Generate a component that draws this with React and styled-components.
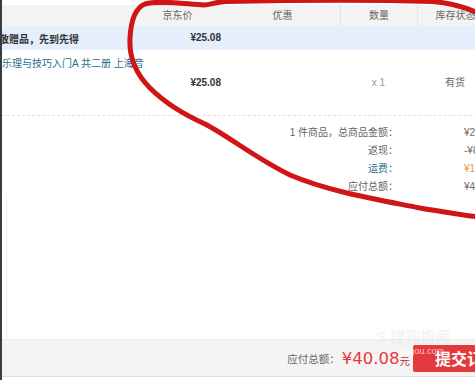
import React from 'react';
import styled, { createGlobalStyle } from 'styled-components';

const GlobalStyle = createGlobalStyle`
	html, body {
		margin: 0;
		padding: 0;
		background: #fff;
	}
	body {
		font-family: 'Liberation Sans', 'Noto Sans CJK SC', sans-serif;
		font-size: 10px;
		color: #666;
		overflow: hidden;
	}
`;

const LINK = '#1f6e8c';
const RED = '#e4393c';
const COLS = '128px 95px 115px 77px 76px 1fr';

const Page = styled.div`
	position: relative;
	display: flex;
	width: 475px;
	height: 380px;
	overflow: hidden;
`;

const LeftEdge = styled.div`
	width: 2px;
	flex-shrink: 0;
	background: #3b3b3b;
`;

const Main = styled.div`
	flex: 1;
	min-width: 0;
	display: flex;
	flex-direction: column;
	padding-top: 5px;
	overflow: hidden;
`;

const TableRow = styled.div`
	display: grid;
	grid-template-columns: ${COLS};
	width: 560px;
	flex-shrink: 0;
`;

const HeadRow = styled(TableRow)`
	height: 21px;
	background: #f3f3f3;
	align-items: stretch;
`;

const HeadCell = styled.div`
	text-align: center;
	line-height: 21px;
	color: #666;
	border-left: ${(p) => (p.$divider ? '1px solid #e4e4e4' : 'none')};
`;

const GiftRow = styled(TableRow)`
	height: 24px;
	background: #e4effb;
	align-items: center;
	font-weight: 700;
	color: #333;
`;

const GiftText = styled.div`
	margin-left: -3px;
	white-space: nowrap;
`;

const ItemRow = styled(TableRow)`
	height: 65px;
	border-bottom: 1px dashed #e2e2e2;
`;

const Cell = styled.div`
	text-align: ${(p) => p.$align || 'center'};
	padding-top: ${(p) => p.$top || 0}px;
	padding-right: ${(p) => p.$right || 0}px;
	line-height: 12px;
	font-weight: ${(p) => (p.$bold ? 700 : 400)};
	color: ${(p) => p.$color || '#666'};
	white-space: nowrap;
`;

const ProductName = styled.a`
	display: block;
	padding-top: 8px;
	line-height: 12px;
	color: ${LINK};
	text-decoration: none;
	white-space: nowrap;
`;

const Summary = styled.div`
	display: grid;
	grid-template-columns: 396px auto;
	column-gap: 66px;
	padding-top: 8px;
	line-height: 18px;
	flex-shrink: 0;
`;

const SumLabel = styled.div`
	text-align: right;
	color: ${(p) => (p.$link ? LINK : '#666')};
`;

const SumValue = styled.div`
	color: ${(p) => p.$color || '#666'};
	white-space: nowrap;
`;

const Filler = styled.div`
	flex: 1;
	margin-left: 4px;
	border-left: 1px solid #f2f2f2;
`;

const BottomBar = styled.div`
	box-sizing: border-box;
	display: flex;
	align-items: center;
	justify-content: flex-end;
	width: 560px;
	height: 38px;
	flex-shrink: 0;
	margin-bottom: 3px;
	padding-right: 41px;
	background: #f4f4f4;
	border-top: 1px solid #ececec;
	border-bottom: 1px solid #dcdcdc;
`;

const TotalLabel = styled.span`
	font-size: 10.5px;
	color: #666;
`;

const TotalPrice = styled.span`
	font-family: 'DejaVu Sans', 'Liberation Sans', sans-serif;
	font-size: 16.5px;
	color: ${RED};
	margin-left: 2px;
`;

const Yuan = styled.span`
	font-size: 10.5px;
	color: #b33;
	margin-top: 4px;
`;

const SubmitButton = styled.button`
	box-sizing: border-box;
	width: 108px;
	height: 27px;
	margin-left: 3px;
	padding: 0 0 0 22px;
	border: none;
	border-radius: 2px;
	background: ${RED};
	color: #fff;
	font-family: 'Noto Sans CJK SC', sans-serif;
	font-size: 16px;
	font-weight: 700;
	line-height: 27px;
	text-align: left;
	white-space: nowrap;
`;

const Watermark = styled.div`
	position: absolute;
	left: 376px;
	top: 325px;
	font-family: 'Liberation Sans', 'Noto Sans CJK SC', sans-serif;
	font-size: 15px;
	font-weight: 700;
	color: rgba(225, 225, 225, 0.35);
	pointer-events: none;
	white-space: nowrap;
`;

const WatermarkUrl = styled.div`
	position: absolute;
	left: 400px;
	top: 346px;
	font-size: 9px;
	color: rgba(255, 255, 255, 0.7);
	pointer-events: none;
`;

const Scribble = styled.svg`
	position: absolute;
	left: 0;
	top: 0;
	width: 475px;
	height: 380px;
	pointer-events: none;
`;

const App = () => {
	return (
		<>
			<GlobalStyle />
			<Page>
				<LeftEdge />
				<Main>
					<HeadRow>
						<HeadCell />
						<HeadCell>京东价</HeadCell>
						<HeadCell>优惠</HeadCell>
						<HeadCell $divider>数量</HeadCell>
						<HeadCell $divider>库存状态</HeadCell>
						<HeadCell />
					</HeadRow>
					<GiftRow>
						<GiftText>敬赠品，先到先得</GiftText>
						<Cell $align='right' $right={4} $bold $color='#333'>
							¥25.08
						</Cell>
					</GiftRow>
					<ItemRow>
						<ProductName href='#'>乐理与技巧入门A 共二册 上海音</ProductName>
						<Cell $align='right' $right={4} $top={27} $bold $color='#333'>
							¥25.08
						</Cell>
						<Cell $top={27} />
						<Cell $top={27} $color='#999'>
							x 1
						</Cell>
						<Cell $top={27}>有货</Cell>
					</ItemRow>
					<Summary>
						<SumLabel>1 件商品，总商品金额：</SumLabel>
						<SumValue>¥25.08</SumValue>
						<SumLabel>返现：</SumLabel>
						<SumValue>-¥0.00</SumValue>
						<SumLabel $link>运费：</SumLabel>
						<SumValue $color='#f0913f'>¥15.00</SumValue>
						<SumLabel>应付总额：</SumLabel>
						<SumValue>¥40.08</SumValue>
					</Summary>
					<Filler />
					<BottomBar>
						<TotalLabel>应付总额：</TotalLabel>
						<TotalPrice>¥40.08</TotalPrice>
						<Yuan>元</Yuan>
						<SubmitButton>提交订单</SubmitButton>
					</BottomBar>
				</Main>
				<Watermark>S 搜狗指南</Watermark>
				<WatermarkUrl>sogou.com</WatermarkUrl>
				<Scribble viewBox='0 0 475 380'>
					<path
						d='M 478 13 C 465 7, 452 3, 432 1.5 C 380 0, 280 0.5, 225 1.5 C 215 2, 210 5, 204 5 C 185 4, 160 0, 145 4 C 135 8, 131 20, 130 38 C 129 55, 134 72, 150 88 C 165 103, 185 115, 205 124 C 230 137, 255 158, 290 175 C 330 192, 380 200, 420 208 C 445 212, 465 216, 480 217'
						fill='none'
						stroke='#cf1515'
						strokeWidth='5'
						strokeLinecap='round'
						strokeLinejoin='round'
					/>
				</Scribble>
			</Page>
		</>
	);
};

export default App;
